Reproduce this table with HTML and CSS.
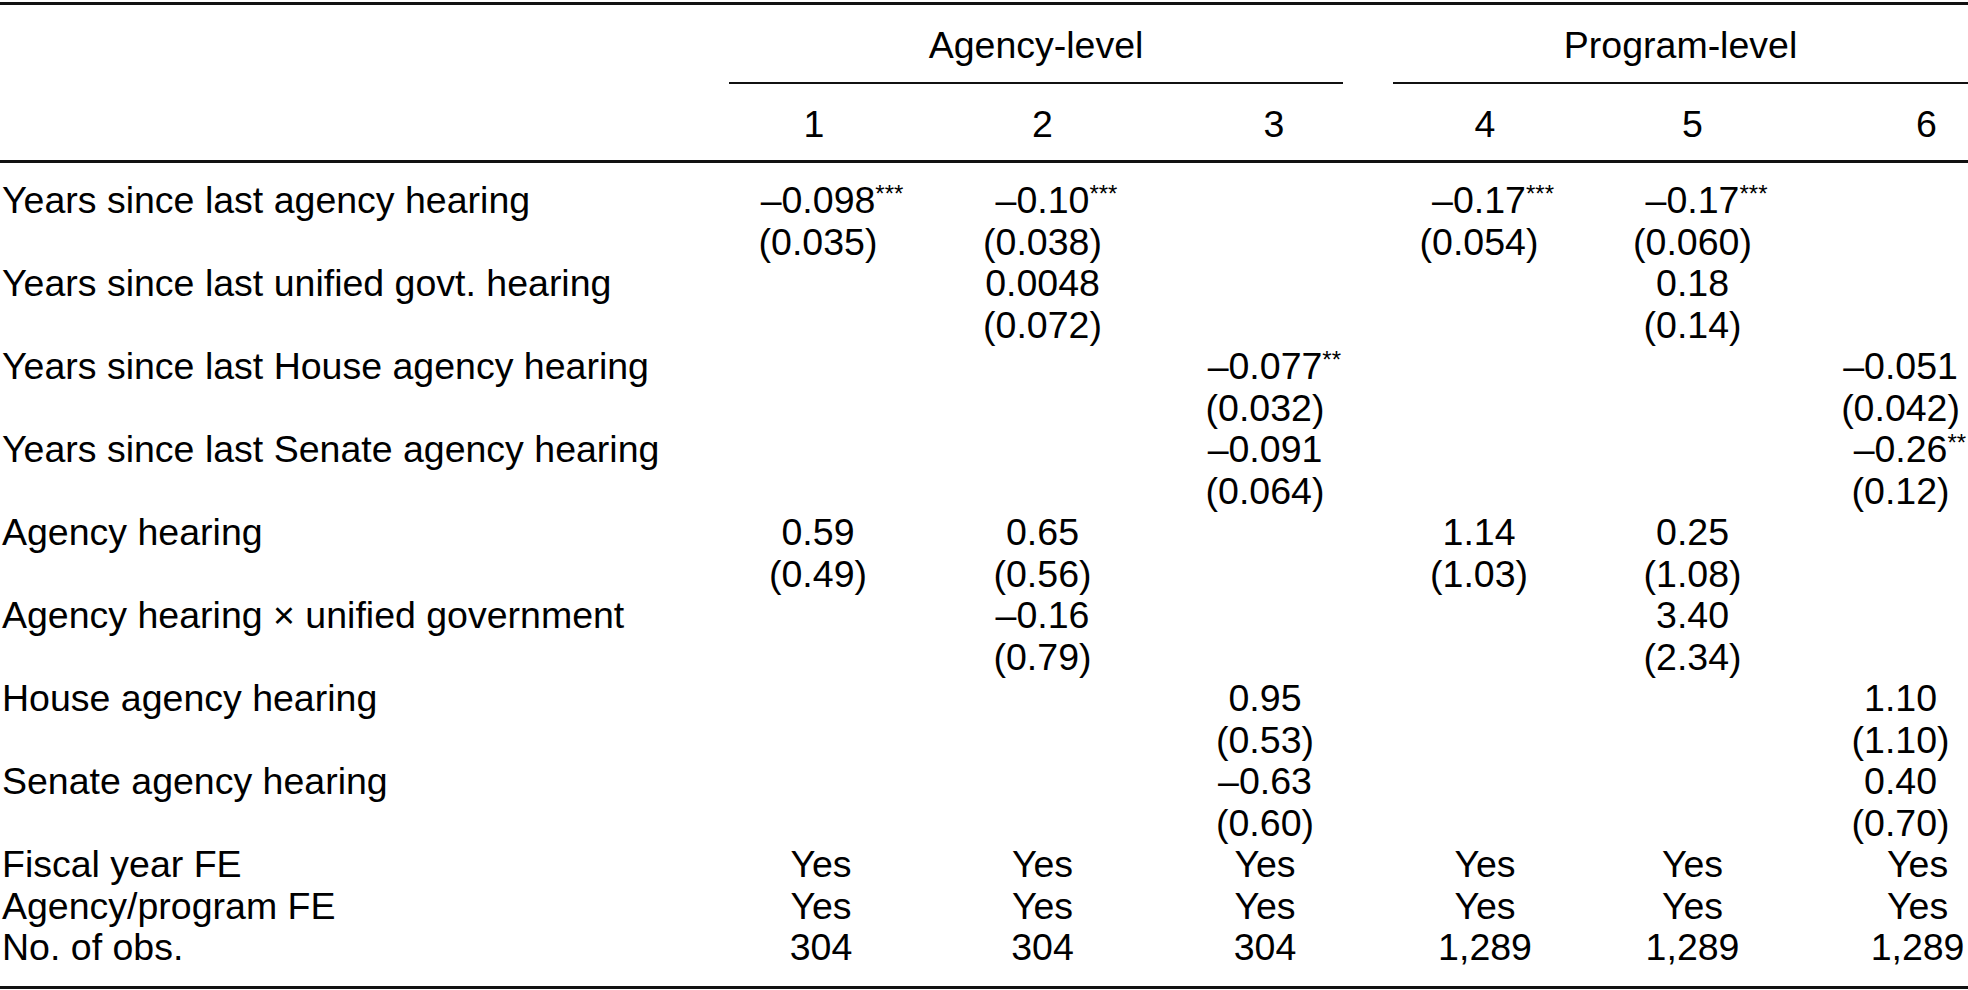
FILE: index.html
```html
<!DOCTYPE html>
<html lang="en">
<head>
<meta charset="utf-8">
<title>Regression table</title>
<link rel="stylesheet" href="styles.css">
</head>
<body>
<table class="reg">
  <colgroup>
    <col class="c-label">
    <col class="c1">
    <col class="c2">
    <col class="c3">
    <col class="c4">
    <col class="c5">
    <col class="c6">
  </colgroup>
  <thead>
    <tr class="span-row">
      <th></th>
      <th colspan="3"><div class="spanner sp-agency">Agency-level</div></th>
      <th colspan="3"><div class="spanner sp-program">Program-level</div></th>
    </tr>
    <tr class="num-row">
      <th></th>
      <th>1</th><th>2</th><th class="h3">3</th><th class="h4">4</th><th>5</th><th class="h6">6</th>
    </tr>
  </thead>
  <tbody>
    <tr class="first">
      <td class="lab">Years since last agency hearing</td>
      <td class="d1">–0.098<span class="st">***</span></td><td>–0.10<span class="st">***</span></td><td></td>
      <td>–0.17<span class="st">***</span></td><td>–0.17<span class="st">***</span></td><td class="last"></td>
    </tr>
    <tr>
      <td class="lab"></td>
      <td class="d1">(0.035)</td><td>(0.038)</td><td></td><td>(0.054)</td><td>(0.060)</td><td class="last"></td>
    </tr>
    <tr>
      <td class="lab">Years since last unified govt. hearing</td>
      <td class="d1"></td><td>0.0048</td><td></td><td></td><td>0.18</td><td class="last"></td>
    </tr>
    <tr>
      <td class="lab"></td>
      <td class="d1"></td><td>(0.072)</td><td></td><td></td><td>(0.14)</td><td class="last"></td>
    </tr>
    <tr>
      <td class="lab">Years since last House agency hearing</td>
      <td class="d1"></td><td></td><td>–0.077<span class="st">**</span></td><td></td><td></td><td class="last">–0.051</td>
    </tr>
    <tr>
      <td class="lab"></td>
      <td class="d1"></td><td></td><td>(0.032)</td><td></td><td></td><td class="last">(0.042)</td>
    </tr>
    <tr>
      <td class="lab">Years since last Senate agency hearing</td>
      <td class="d1"></td><td></td><td>–0.091</td><td></td><td></td><td class="last">–0.26<span class="st">**</span></td>
    </tr>
    <tr>
      <td class="lab"></td>
      <td class="d1"></td><td></td><td>(0.064)</td><td></td><td></td><td class="last">(0.12)</td>
    </tr>
    <tr>
      <td class="lab">Agency hearing</td>
      <td class="d1">0.59</td><td>0.65</td><td></td><td>1.14</td><td>0.25</td><td class="last"></td>
    </tr>
    <tr>
      <td class="lab"></td>
      <td class="d1">(0.49)</td><td>(0.56)</td><td></td><td>(1.03)</td><td>(1.08)</td><td class="last"></td>
    </tr>
    <tr>
      <td class="lab">Agency hearing × unified government</td>
      <td class="d1"></td><td>–0.16</td><td></td><td></td><td>3.40</td><td class="last"></td>
    </tr>
    <tr>
      <td class="lab"></td>
      <td class="d1"></td><td>(0.79)</td><td></td><td></td><td>(2.34)</td><td class="last"></td>
    </tr>
    <tr>
      <td class="lab">House agency hearing</td>
      <td class="d1"></td><td></td><td>0.95</td><td></td><td></td><td class="last">1.10</td>
    </tr>
    <tr>
      <td class="lab"></td>
      <td class="d1"></td><td></td><td>(0.53)</td><td></td><td></td><td class="last">(1.10)</td>
    </tr>
    <tr>
      <td class="lab">Senate agency hearing</td>
      <td class="d1"></td><td></td><td>–0.63</td><td></td><td></td><td class="last">0.40</td>
    </tr>
    <tr>
      <td class="lab"></td>
      <td class="d1"></td><td></td><td>(0.60)</td><td></td><td></td><td class="last">(0.70)</td>
    </tr>
    <tr class="fe">
      <td class="lab">Fiscal year FE</td>
      <td class="d1">Yes</td><td>Yes</td><td>Yes</td><td class="d4">Yes</td><td>Yes</td><td class="last">Yes</td>
    </tr>
    <tr class="fe">
      <td class="lab">Agency/program FE</td>
      <td class="d1">Yes</td><td>Yes</td><td>Yes</td><td class="d4">Yes</td><td>Yes</td><td class="last">Yes</td>
    </tr>
    <tr class="fe final">
      <td class="lab">No. of obs.</td>
      <td class="d1">304</td><td>304</td><td>304</td><td class="d4">1,289</td><td>1,289</td><td class="last">1,289</td>
    </tr>
  </tbody>
</table>
</body>
</html>
```
FILE: styles.css
```css
html, body {
  margin: 0;
  padding: 0;
  background: #ffffff;
  overflow: hidden;
}

body {
  font-family: "Liberation Sans", Arial, Helvetica, sans-serif;
  font-size: 37.5px;
  color: #000000;
}

.reg {
  width: 1968px;
  table-layout: fixed;
  border-collapse: collapse;
  border-spacing: 0;
  margin-top: 2px;
  border-top: 3px solid #111;
  border-bottom: 3px solid #111;
}

.c-label { width: 699px; }
.c1 { width: 230px; }
.c2 { width: 227px; }
.c3 { width: 218px; }
.c4 { width: 210px; }
.c5 { width: 217px; }
.c6 { width: 167px; }

.reg th,
.reg td {
  padding: 0;
  font-weight: normal;
  line-height: 41.5px;
  height: 41.5px;
  text-align: center;
  white-space: nowrap;
  vertical-align: top;
}

.reg td.d1 {
  padding-left: 8px;
}

.reg td.last {
  padding-left: 32px;
}

.reg tr.fe td.d1 {
  padding-left: 14px;
}

.reg tr.fe td.d4 {
  padding-left: 12px;
}

.reg tr.fe td.last {
  padding-left: 66px;
}

.reg td.lab {
  text-align: left;
  padding-left: 2px;
}

/* spanner header */
.span-row th {
  padding-top: 20px;
}

.spanner {
  line-height: 41.5px;
  padding-bottom: 15px;
  border-bottom: 2px solid #111;
}

.sp-agency {
  margin-left: 30px;
  margin-right: 31px;
}

.sp-program {
  margin-left: 19px;
}

.num-row th {
  padding-top: 20.5px;
  padding-bottom: 14.5px;
  border-bottom: 3px solid #111;
}

.num-row th.h3 {
  padding-left: 18px;
}

.num-row th.h4 {
  padding-left: 12px;
}

.num-row th.h6 {
  padding-left: 84px;
}

tbody tr.first td {
  padding-top: 17px;
}

tbody tr.final td {
  padding-bottom: 17.5px;
}

.st {
  display: inline-block;
  width: 0;
  font-size: 24px;
  line-height: 0;
  vertical-align: 11px;
  text-align: left;
  white-space: nowrap;
}
```
